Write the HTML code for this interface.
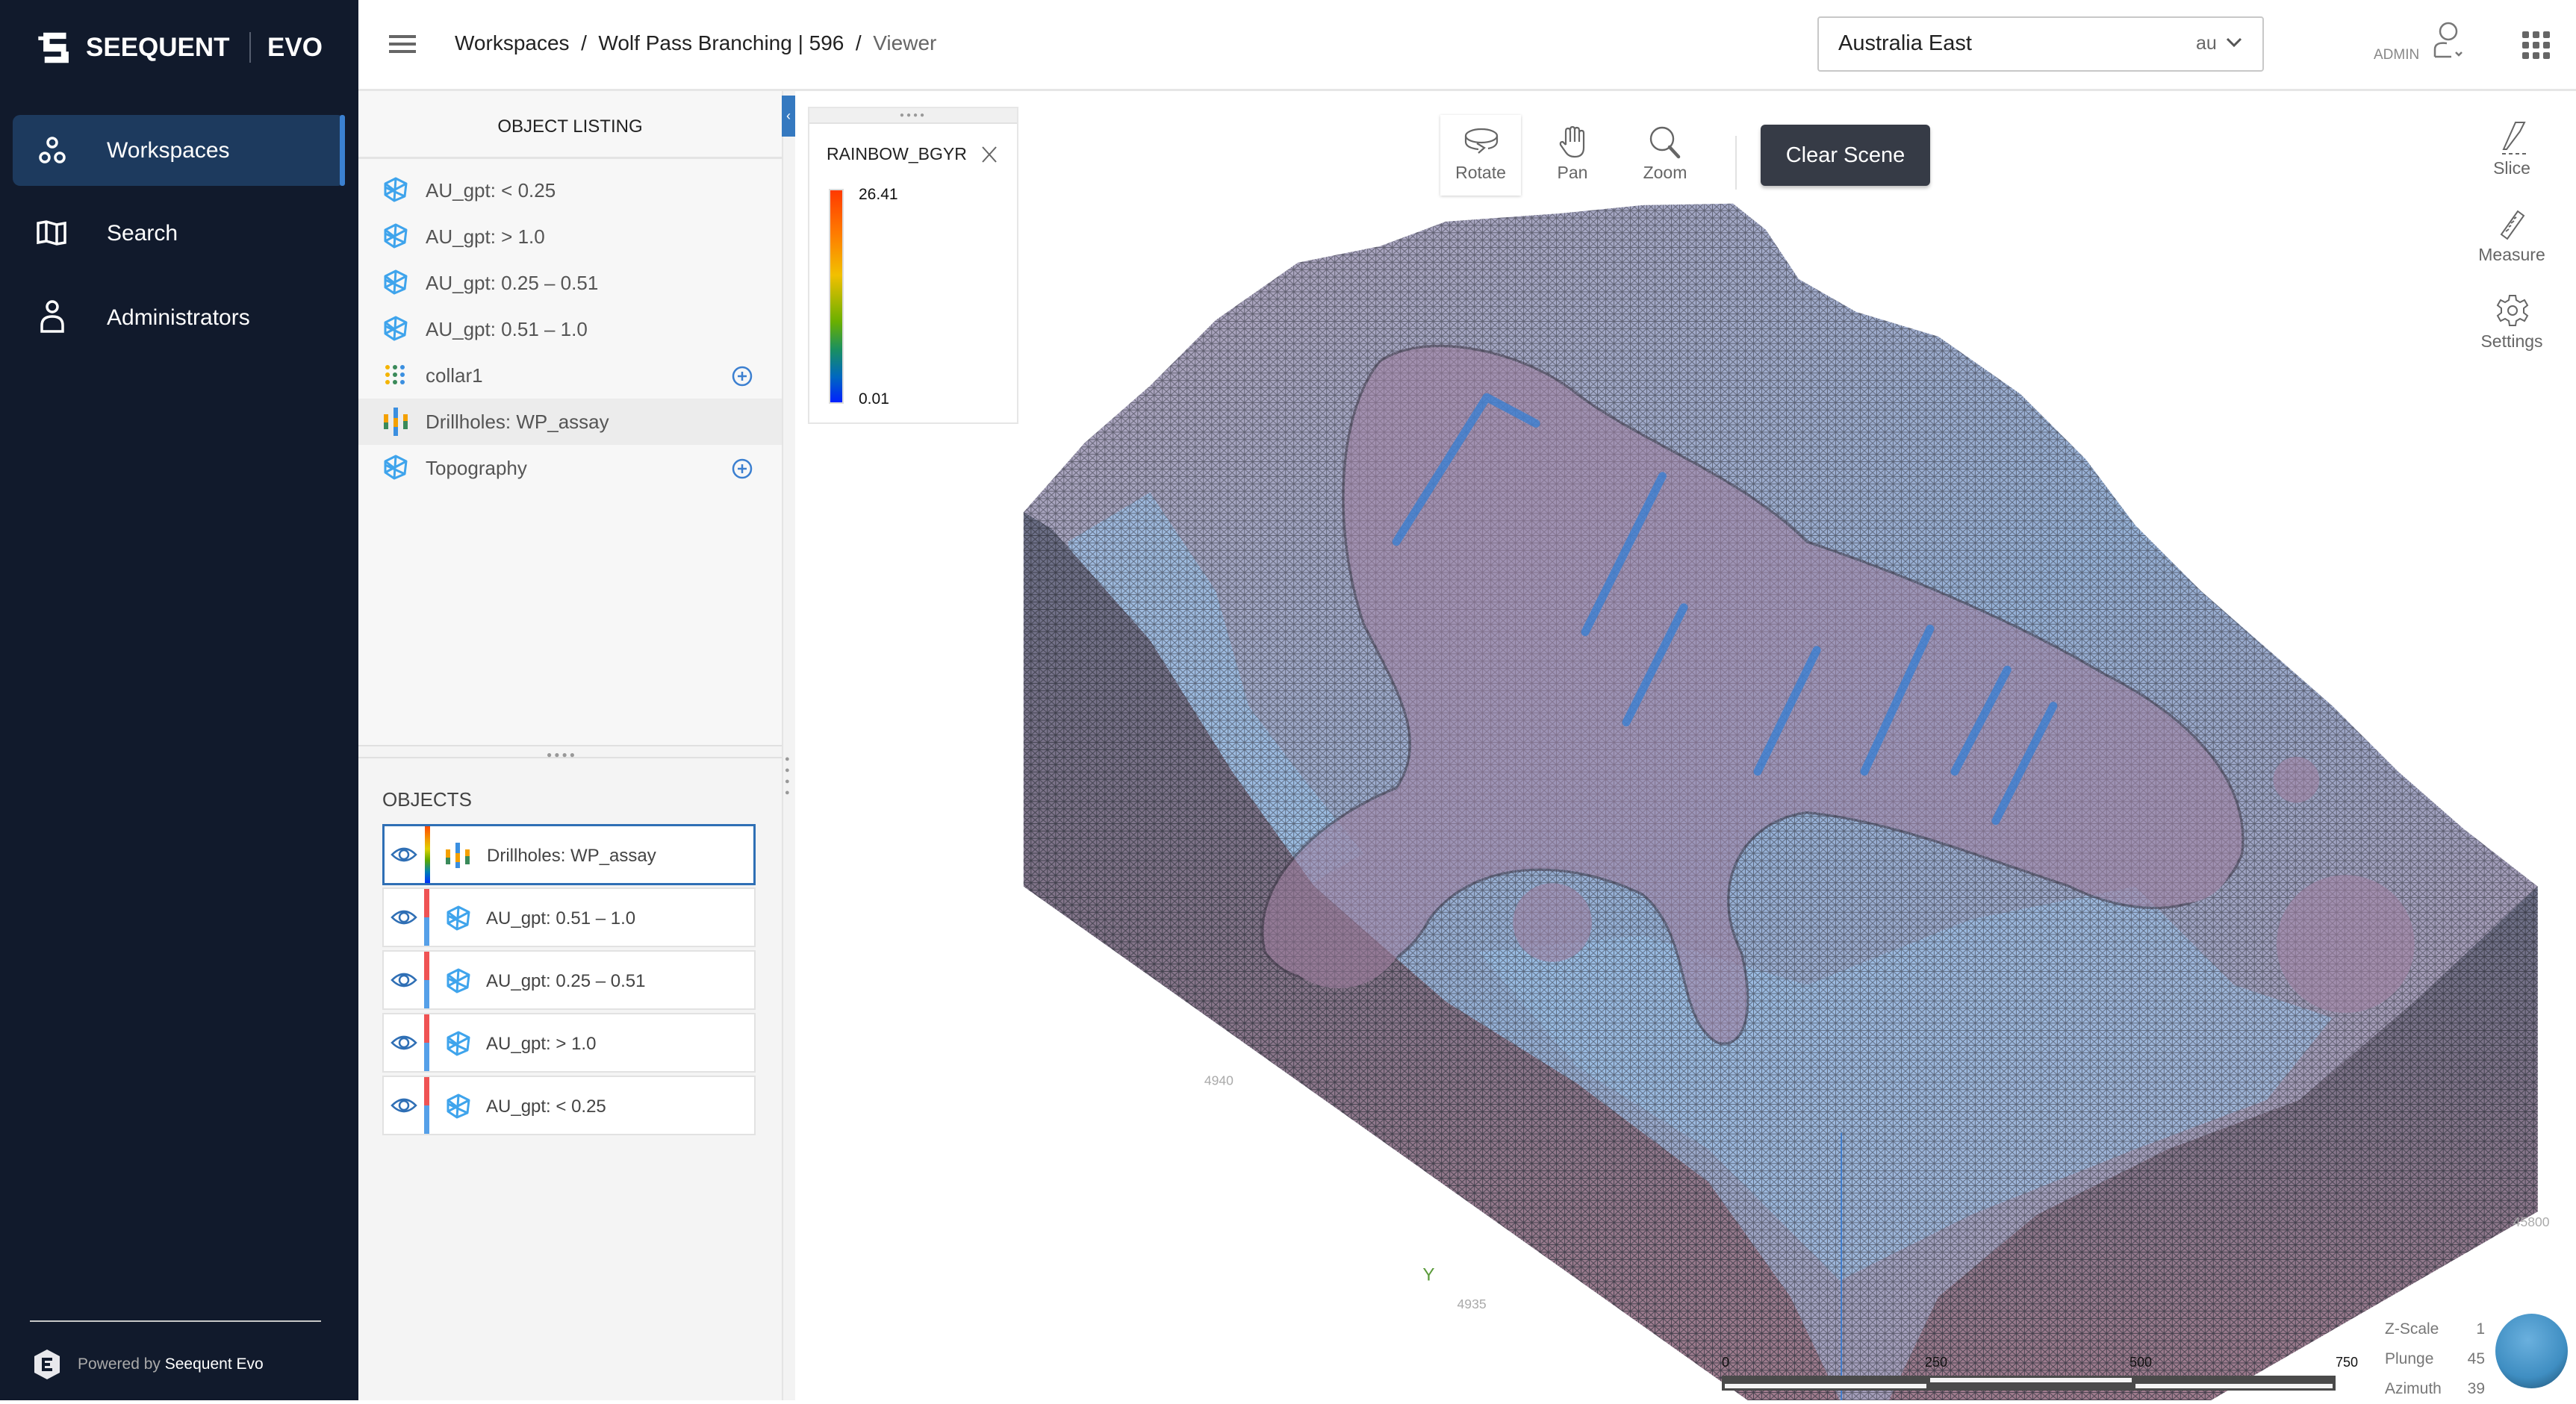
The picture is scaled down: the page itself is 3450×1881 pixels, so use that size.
<!DOCTYPE html>
<html><head><meta charset="utf-8"><style>
*{margin:0;padding:0;box-sizing:border-box}
body{width:3450px;height:1876px;overflow:hidden;background:#fff;font-family:"Liberation Sans",sans-serif;position:relative}
.a{position:absolute}
.side{left:0;top:0;width:480px;height:1876px;background:#111a2c}
.nav{left:17px;width:445px;height:95px;color:#fff;font-size:30px;display:flex;align-items:center}
.nav span{position:absolute;left:126px}
.item{position:absolute;left:0;width:567px;height:62px;display:flex;align-items:center;font-size:26px;color:#555}
.item .t{position:absolute;left:90px}
.card{position:absolute;left:512px;width:500px;height:80px;background:#fff;border:2px solid #e2e2e2;font-size:24px;color:#444}
.card .bar{position:absolute;left:54px;top:0;width:7px;height:100%;background:linear-gradient(#ef5354 50%,#56a0e8 50%)}
.card .t{position:absolute;left:137px;top:26px}
.card svg{position:absolute;left:82px;top:22px}
.lbl{font-size:23px;color:#666;text-align:center}
</style></head><body>

<svg class="a" style="left:0;top:0" width="3450" height="1876" viewBox="0 0 1568 853">
<defs>
<pattern id="m" width="5" height="4.5" patternUnits="userSpaceOnUse">
<path d="M0 0L5 4.5M5 0L0 4.5M0 2.25H5M2.5 0V4.5" stroke="#33353f" stroke-width="0.45" fill="none"/>
</pattern>
<linearGradient id="g1" x1="0" y1="0" x2="1" y2="1">
<stop offset="0" stop-color="#b0a0b6"/><stop offset=".5" stop-color="#96b2d8"/><stop offset="1" stop-color="#b08ea2"/>
</linearGradient>
<linearGradient id="g2" x1="0" y1="0" x2="0" y2="1">
<stop offset="0" stop-color="#6c7088"/><stop offset="1" stop-color="#a07c8e"/>
</linearGradient>
</defs>
<path d="M623,312 L660,270 L700,235 L740,195 L790,160 L840,150 L880,135 L950,130 L1000,125 L1055,124 L1075,140 L1095,170 L1130,190 L1180,205 L1230,240 L1270,280 L1300,320 L1340,360 L1380,395 L1420,430 L1460,470 L1500,505 L1545,540 L1545,738 L1346,853 L1064,853 L623,540 Z" fill="url(#g1)"/>
<path d="M650,330 L700,300 L740,360 L760,430 L790,470 L830,520 L760,560 L700,480 L660,400 Z" fill="#9cc4ec" opacity=".7"/>
<path d="M900,580 L1000,570 L1100,600 L1200,560 L1300,540 L1360,600 L1420,620 L1380,670 L1300,700 L1200,740 L1120,780 L1040,700 L960,650 Z" fill="#9cc4ec" opacity=".6"/>
<path d="M623,312 L660,270 L700,235 L740,195 L790,160 L840,150 L880,135 L950,130 L1000,125 L1055,124 L1075,140 L1095,170 L1130,190 L1180,205 L1230,240 L1270,280 L1300,320 L1340,360 L1380,395 L1420,430 L1460,470 L1500,505 L1545,540 L1545,738 L1346,853 L1064,853 L623,540 Z" fill="url(#m)" opacity=".6"/>
<path d="M623,312 L640,322 L700,390 L750,470 L800,540 L880,610 L960,660 L1040,720 L1090,790 L1120,853 L1064,853 L623,540 Z" fill="url(#g2)"/>
<path d="M1545,540 L1470,610 L1400,670 L1320,700 L1240,740 L1180,790 L1150,853 L1346,853 L1545,738 Z" fill="url(#g2)"/>
<path d="M623,312 L640,322 L700,390 L750,470 L800,540 L880,610 L960,660 L1040,720 L1090,790 L1120,853 L1064,853 L623,540 Z M1545,540 L1470,610 L1400,670 L1320,700 L1240,740 L1180,790 L1150,853 L1346,853 L1545,738 Z" fill="url(#m)" opacity=".8"/>
<g fill="#a07fa0" opacity=".55">
<path stroke="#403848" stroke-width="1.5" d="M840,220 C870,200 930,215 960,240 C1000,270 1060,290 1100,330 C1160,350 1230,380 1280,410 C1340,440 1370,480 1365,520 C1350,560 1300,560 1260,540 C1200,520 1150,500 1100,495 C1060,500 1040,540 1060,580 C1070,620 1060,640 1045,635 C1020,620 1030,570 1000,545 C960,525 900,520 870,560 C850,600 790,610 770,580 C760,540 800,500 850,480 C870,450 850,420 830,380 C810,320 815,250 840,220 Z"/>
<circle cx="815" cy="560" r="42"/><circle cx="1428" cy="575" r="42"/><circle cx="1398" cy="475" r="14"/><circle cx="945" cy="562" r="24"/><circle cx="1330" cy="520" r="30"/>
</g>
<g stroke="#2f7fd8" stroke-width="5" opacity=".7" stroke-linecap="round">
<path d="M905,242 L850,330"/><path d="M905,242 L935,258"/><path d="M1012,290 L965,385"/><path d="M1025,370 L990,440"/><path d="M1106,396 L1070,470"/><path d="M1175,383 L1135,470"/><path d="M1222,408 L1190,470"/><path d="M1250,430 L1215,500"/>
</g>
<line x1="1121" y1="690" x2="1121" y2="853" stroke="#3b7bd0" stroke-width=".8"/>
<text x="733" y="661" font-size="8" fill="#aaa" font-family="Liberation Sans">4940</text>
<text x="866" y="780" font-size="11" fill="#5a9a3a" font-family="Liberation Sans">Y</text>
<text x="887" y="797" font-size="8" fill="#aaa" font-family="Liberation Sans">4935</text>
<text x="1530" y="747" font-size="8" fill="#aaa" font-family="Liberation Sans">45800</text>
</svg>

<!-- sidebar -->
<div class="a side"></div>
<svg class="a" style="left:49px;top:42px" width="52" height="44" viewBox="0 0 56 52"><path d="M8 2H44V12H18V20H44V32H48V50H10V40H36V32H8Z" fill="#fff"/><rect x="0" y="8" width="10" height="6" fill="#fff"/></svg>
<div class="a" style="left:115px;top:44px;color:#fff;font-size:35px;font-weight:bold">SEEQUENT</div>
<div class="a" style="left:334px;top:43px;width:2px;height:41px;background:#555d6e"></div>
<div class="a" style="left:358px;top:44px;color:#fff;font-size:35px;font-weight:bold">EVO</div>
<div class="a nav" style="top:154px;background:#1d3a5e;border-radius:10px"><div class="a" style="right:0;top:0;width:7px;height:95px;background:#3b80d0;border-radius:3px"></div>
<svg class="a" style="left:34px;top:28px" width="38" height="40" viewBox="0 0 38 40" fill="none" stroke="#fff" stroke-width="3.5"><circle cx="19" cy="9" r="6"/><circle cx="9" cy="29" r="6"/><circle cx="29" cy="29" r="6"/></svg><span>Workspaces</span></div>
<div class="a nav" style="top:265px"><svg class="a" style="left:32px;top:30px" width="40" height="34" viewBox="0 0 40 34" fill="none" stroke="#fff" stroke-width="3.5"><path d="M2 4L13 2L27 6L38 4V30L27 32L13 28L2 30Z M13 2V28 M27 6V32"/></svg><span>Search</span></div>
<div class="a nav" style="top:378px"><svg class="a" style="left:36px;top:24px" width="34" height="44" viewBox="0 0 34 44" fill="none" stroke="#fff" stroke-width="3.5"><circle cx="17" cy="9" r="7"/><path d="M3 42V34Q3 22 17 22Q31 22 31 34V42Z"/></svg><span>Administrators</span></div>
<div class="a" style="left:40px;top:1769px;width:390px;height:2px;background:#c8c8c8"></div>
<svg class="a" style="left:45px;top:1807px" width="36" height="42" viewBox="0 0 36 42"><path d="M18 1L35 10V32L18 41L1 32V10Z" fill="#e8e8ec"/><path d="M11 12H25V16H15V19H22V23H15V26H25V30H11Z" fill="#111a2c"/></svg>
<div class="a" style="left:104px;top:1816px;font-size:21px;color:#aaa">Powered by <span style="color:#fff">Seequent Evo</span></div>

<!-- header -->
<div class="a" style="left:480px;top:0;width:2970px;height:122px;background:#fff;border-bottom:3px solid #e6e6e6"></div>
<div class="a" style="left:521px;top:47px;width:36px;height:4px;background:#666;box-shadow:0 10px 0 #666,0 20px 0 #666"></div>
<div class="a" style="left:609px;top:42px;font-size:28px;color:#222">Workspaces &nbsp;/&nbsp; Wolf Pass Branching | 596 &nbsp;/&nbsp; <span style="color:#666">Viewer</span></div>
<div class="a" style="left:2434px;top:22px;width:598px;height:74px;border:2px solid #c8c8c8;border-radius:4px"></div>
<div class="a" style="left:2462px;top:42px;font-size:29px;color:#222">Australia East</div>
<div class="a" style="left:2941px;top:44px;font-size:25px;color:#666">au</div>
<svg class="a" style="left:2981px;top:50px" width="22" height="14" viewBox="0 0 22 14"><path d="M2 2L11 11L20 2" stroke="#555" stroke-width="3" fill="none"/></svg>
<div class="a" style="left:3179px;top:63px;font-size:19px;color:#888">ADMIN</div>
<svg class="a" style="left:3257px;top:28px" width="52" height="52" viewBox="0 0 52 52" fill="none" stroke="#777" stroke-width="2.5"><circle cx="22" cy="14" r="11"/><path d="M4 48V38Q4 28 20 30M4 48H26M32 42L36 46L40 42"/></svg>
<svg class="a" style="left:3378px;top:42px" width="38" height="38" viewBox="0 0 38 38" fill="#666"><rect x="0" y="0" width="9" height="9" rx="2"/><rect x="14" y="0" width="9" height="9" rx="2"/><rect x="28" y="0" width="9" height="9" rx="2"/><rect x="0" y="14" width="9" height="9" rx="2"/><rect x="14" y="14" width="9" height="9" rx="2"/><rect x="28" y="14" width="9" height="9" rx="2"/><rect x="0" y="28" width="9" height="9" rx="2"/><rect x="14" y="28" width="9" height="9" rx="2"/><rect x="28" y="28" width="9" height="9" rx="2"/></svg>

<!-- object listing panel -->
<div class="a" style="left:480px;top:122px;width:567px;height:1754px;background:#f7f7f7"></div>
<div class="a" style="left:480px;top:122px;width:567px;height:91px;border-bottom:3px solid #e4e4e4;font-size:24px;color:#222;text-align:center;line-height:96px">OBJECT LISTING</div>
<div class="a" style="left:480px;top:0">
<svg width="0" height="0" style="position:absolute"><defs><g id="ic"><path d="M18 2L32 9L30 26L16 32L4 24L4 9Z M18 2L16 32 M4 14L30 26 M32 9L4 24 M4 9L16 18" stroke="#3fa4ec" stroke-width="3" fill="none" stroke-linejoin="round"/></g></defs></svg>
<div class="item" style="top:224px"><svg class="a" style="left:32px;top:13px" width="36" height="36"><use href="#ic"/></svg><span class="t">AU_gpt: &lt; 0.25</span></div>
<div class="item" style="top:286px"><svg class="a" style="left:32px;top:13px" width="36" height="36"><use href="#ic"/></svg><span class="t">AU_gpt: &gt; 1.0</span></div>
<div class="item" style="top:348px"><svg class="a" style="left:32px;top:13px" width="36" height="36"><use href="#ic"/></svg><span class="t">AU_gpt: 0.25 – 0.51</span></div>
<div class="item" style="top:410px"><svg class="a" style="left:32px;top:13px" width="36" height="36"><use href="#ic"/></svg><span class="t">AU_gpt: 0.51 – 1.0</span></div>
<div class="item" style="top:472px"><svg class="a" style="left:35px;top:16px" width="30" height="30"><g fill="#f4b400"><circle cx="4" cy="4" r="3"/><circle cx="4" cy="14" r="3"/><circle cx="4" cy="24" r="3"/></g><g fill="#3a8a5a"><circle cx="14" cy="4" r="3"/><circle cx="14" cy="14" r="3"/><circle cx="14" cy="24" r="3"/></g><g fill="#3b8fe0"><circle cx="24" cy="4" r="3"/><circle cx="24" cy="14" r="3"/><circle cx="24" cy="24" r="3"/></g></svg><span class="t">collar1</span><svg class="a" style="left:500px;top:18px" width="28" height="28"><circle cx="14" cy="14" r="12" stroke="#3b7fd0" stroke-width="2.5" fill="none"/><path d="M14 8V20M8 14H20" stroke="#3b7fd0" stroke-width="2.5"/></svg></div>
<div class="item" style="top:534px;background:#ececec"><svg class="a" style="left:34px;top:12px" width="36" height="38"><rect x="0" y="9" width="6" height="20" fill="#f4a000"/><rect x="0" y="20" width="6" height="9" fill="#3a8a5a"/><rect x="13" y="0" width="6" height="38" fill="#3b8fe0"/><rect x="13" y="14" width="6" height="12" fill="#f4a000"/><rect x="26" y="9" width="6" height="20" fill="#3a8a5a"/><rect x="26" y="9" width="6" height="9" fill="#f4a000"/></svg><span class="t">Drillholes: WP_assay</span></div>
<div class="item" style="top:596px"><svg class="a" style="left:32px;top:13px" width="36" height="36"><use href="#ic"/></svg><span class="t">Topography</span><svg class="a" style="left:500px;top:18px" width="28" height="28"><circle cx="14" cy="14" r="12" stroke="#3b7fd0" stroke-width="2.5" fill="none"/><path d="M14 8V20M8 14H20" stroke="#3b7fd0" stroke-width="2.5"/></svg></div>
</div>
<div class="a" style="left:480px;top:998px;width:567px;height:18px;border-top:2px solid #e0e0e0;border-bottom:2px solid #e0e0e0;background:#f4f4f4"></div>
<div class="a" style="left:732px;top:1004px;font-size:12px;color:#999;letter-spacing:3px">●●●●</div>
<div class="a" style="left:480px;top:1016px;width:567px;height:860px;background:#f4f4f4"></div>
<div class="a" style="left:512px;top:1056px;font-size:26px;color:#444">OBJECTS</div>
<div class="card" style="top:1104px;height:82px;border:3px solid #2f6fb5"><div class="bar" style="background:linear-gradient(#ff4a00,#f0a000 25%,#e0d000 40%,#5aa800 60%,#0080b0 80%,#0030ff)"></div>
<svg width="32" height="34"><rect x="0" y="9" width="6" height="20" fill="#f4a000"/><rect x="0" y="20" width="6" height="9" fill="#3a8a5a"/><rect x="13" y="0" width="6" height="34" fill="#3b8fe0"/><rect x="13" y="14" width="6" height="12" fill="#f4a000"/><rect x="26" y="9" width="6" height="20" fill="#3a8a5a"/><rect x="26" y="9" width="6" height="9" fill="#f4a000"/></svg><span class="t">Drillholes: WP_assay</span></div>
<div class="card" style="top:1189px"><div class="bar"></div><svg width="36" height="36"><use href="#ic"/></svg><span class="t">AU_gpt: 0.51 – 1.0</span></div>
<div class="card" style="top:1273px"><div class="bar"></div><svg width="36" height="36"><use href="#ic"/></svg><span class="t">AU_gpt: 0.25 – 0.51</span></div>
<div class="card" style="top:1357px"><div class="bar"></div><svg width="36" height="36"><use href="#ic"/></svg><span class="t">AU_gpt: &gt; 1.0</span></div>
<div class="card" style="top:1441px"><div class="bar"></div><svg width="36" height="36"><use href="#ic"/></svg><span class="t">AU_gpt: &lt; 0.25</span></div>
<svg class="a" style="left:523px;top:1133px" width="36" height="360" viewBox="0 0 36 360" fill="none" stroke="#2f6fb5" stroke-width="2.5">
<g><path d="M2 12Q18 -4 34 12Q18 28 2 12Z"/><circle cx="18" cy="12" r="6"/></g>
<g transform="translate(0,84)"><path d="M2 12Q18 -4 34 12Q18 28 2 12Z"/><circle cx="18" cy="12" r="6"/></g>
<g transform="translate(0,168)"><path d="M2 12Q18 -4 34 12Q18 28 2 12Z"/><circle cx="18" cy="12" r="6"/></g>
<g transform="translate(0,252)"><path d="M2 12Q18 -4 34 12Q18 28 2 12Z"/><circle cx="18" cy="12" r="6"/></g>
<g transform="translate(0,336)"><path d="M2 12Q18 -4 34 12Q18 28 2 12Z"/><circle cx="18" cy="12" r="6"/></g>
</svg>
<div class="a" style="left:1047px;top:122px;width:18px;height:1754px;background:#f3f3f3;border-left:2px solid #e4e4e4"></div>
<div class="a" style="left:1047px;top:128px;width:18px;height:55px;background:#3579c0;color:#fff;font-size:18px;text-align:center;line-height:55px">‹</div>
<div class="a" style="left:1051px;top:1010px;width:10px;font-size:11px;color:#999;line-height:15px">●<br>●<br>●<br>●</div>

<!-- legend -->
<div class="a" style="left:1082px;top:143px;width:282px;height:425px;background:#fff;border:2px solid #e6e6e6"></div>
<div class="a" style="left:1084px;top:145px;width:278px;height:21px;background:#f0f0f0;border-bottom:2px solid #e2e2e2;text-align:center;font-size:10px;color:#999;letter-spacing:3px;line-height:20px">●●●●</div>
<div class="a" style="left:1107px;top:193px;font-size:23px;color:#222">RAINBOW_BGYR</div>
<svg class="a" style="left:1313px;top:194px" width="24" height="26"><path d="M3 3L21 23M21 3L3 23" stroke="#666" stroke-width="2"/></svg>
<div class="a" style="left:1110px;top:253px;width:20px;height:288px;background:linear-gradient(#ff3a00,#ff7a00 20%,#f2c000 40%,#6ab000 62%,#1a9060 75%,#0068c0 88%,#0020ff);border:2px solid #ddd"></div>
<div class="a" style="left:1150px;top:249px;font-size:21px;color:#111">26.41</div>
<div class="a" style="left:1150px;top:523px;font-size:21px;color:#111">0.01</div>

<!-- toolbar -->
<div class="a" style="left:1929px;top:154px;width:108px;height:108px;background:#fff;box-shadow:0 1px 4px rgba(0,0,0,.2)"></div>
<svg class="a" style="left:1960px;top:170px" width="48" height="36" viewBox="0 0 48 36" fill="none" stroke="#666" stroke-width="2.2"><ellipse cx="24" cy="12" rx="21" ry="9"/><path d="M3 12V20Q3 28 20 30M45 12V20Q44 27 33 29M18 22L28 28L20 35"/></svg>
<svg class="a" style="left:2087px;top:168px" width="38" height="44" viewBox="0 0 38 44" fill="none" stroke="#666" stroke-width="2.2"><path d="M10 26V8Q10 4 13 4Q16 4 16 8V22M16 6Q16 2 19 2Q22 2 22 6V22M22 6Q22 3 25 3Q28 3 28 7V22M28 10Q28 7 31 7Q34 7 34 10V30Q34 42 22 42Q14 42 10 36L3 26Q2 22 6 22L10 26"/></svg>
<svg class="a" style="left:2208px;top:168px" width="44" height="46" viewBox="0 0 44 46" fill="none" stroke="#666" stroke-width="2.4"><circle cx="18" cy="18" r="15"/><path d="M28 29L40 42" stroke-width="4.5" stroke-linecap="round"/></svg>
<div class="a lbl" style="left:1929px;top:218px;width:108px">Rotate</div>
<div class="a lbl" style="left:2056px;top:218px;width:100px">Pan</div>
<div class="a lbl" style="left:2180px;top:218px;width:100px">Zoom</div>
<div class="a" style="left:2324px;top:182px;width:2px;height:72px;background:#e2e2e2"></div>
<div class="a" style="left:2358px;top:167px;width:227px;height:82px;background:#363b46;border-radius:6px;box-shadow:0 3px 5px rgba(0,0,0,.25);color:#fff;font-size:29px;text-align:center;line-height:82px">Clear Scene</div>

<!-- right tools -->
<svg class="a" style="left:3345px;top:160px" width="40" height="50" viewBox="0 0 40 50" fill="none" stroke="#666" stroke-width="2"><path d="M8 40L24 4L36 4L30 16L12 40Z"/><path d="M6 46H38" stroke-dasharray="5 4"/></svg>
<div class="a lbl" style="left:3314px;top:212px;width:100px">Slice</div>
<svg class="a" style="left:3348px;top:280px" width="36" height="44" viewBox="0 0 36 44" fill="none" stroke="#666" stroke-width="2"><path d="M10 40L2 34L24 3L32 9Z M8 30L12 27 M12 24L15 22 M15 19L19 16 M19 13L22 11"/></svg>
<div class="a lbl" style="left:3314px;top:328px;width:100px">Measure</div>
<svg class="a" style="left:3342px;top:393px" width="46" height="46" viewBox="0 0 46 46" fill="none" stroke="#666" stroke-width="2"><path d="M19 3H27L28 9L33 12L39 9L43 16L38 20V26L43 30L39 37L33 34L28 37L27 43H19L18 37L13 34L7 37L3 30L8 26V20L3 16L7 9L13 12L18 9Z"/><circle cx="23" cy="23" r="6"/></svg>
<div class="a lbl" style="left:3309px;top:444px;width:110px">Settings</div>

<!-- scale bar -->
<div class="a" style="left:2306px;top:1843px;width:822px;height:20px;background:#4a4a4a"></div>
<div class="a" style="left:2310px;top:1854px;width:270px;height:6px;background:#f5f5f5"></div>
<div class="a" style="left:2585px;top:1846px;width:270px;height:6px;background:#f5f5f5"></div>
<div class="a" style="left:2860px;top:1854px;width:264px;height:6px;background:#f5f5f5"></div>
<div class="a" style="left:2306px;top:1815px;font-size:18px;color:#111">0</div>
<div class="a" style="left:2578px;top:1815px;font-size:18px;color:#111">250</div>
<div class="a" style="left:2852px;top:1815px;font-size:18px;color:#111">500</div>
<div class="a" style="left:3128px;top:1815px;font-size:18px;color:#111">750</div>
<div class="a" style="left:3194px;top:1761px;font-size:21px;color:#777;line-height:40px">Z-Scale<br>Plunge<br>Azimuth</div>
<div class="a" style="left:3300px;top:1761px;font-size:21px;color:#777;line-height:40px;text-align:right;width:28px">1<br>45<br>39</div>
<div class="a" style="left:3342px;top:1760px;width:97px;height:100px;border-radius:50%;background:radial-gradient(circle at 45% 35%,#6ab0de,#3f8ec2 60%,#1c4a6a)"></div>
</body></html>
